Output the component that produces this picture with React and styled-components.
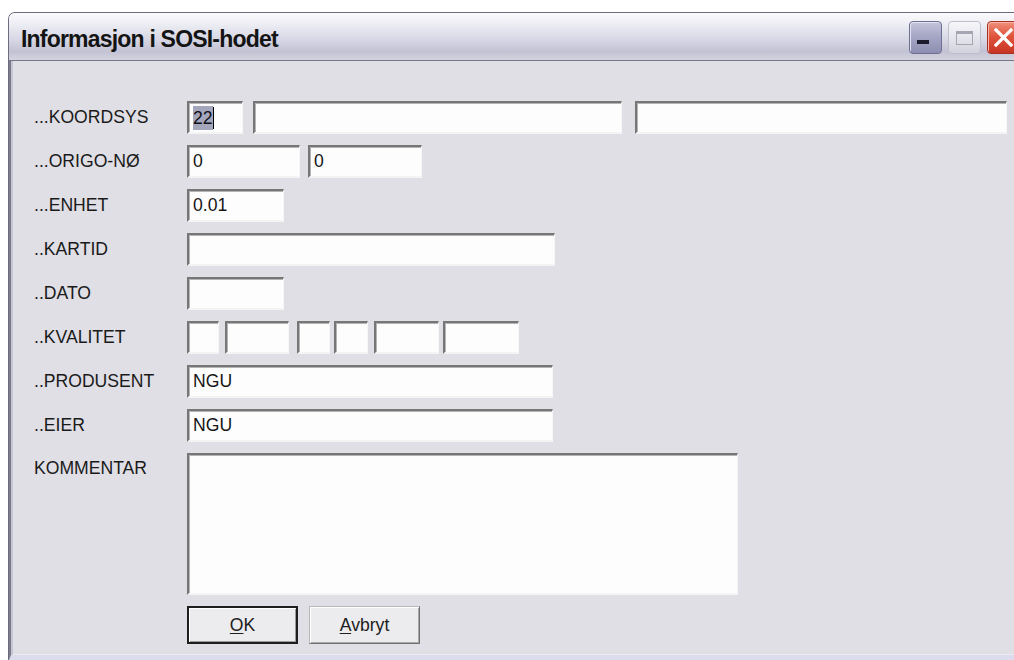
import React from "react";
import styled, { createGlobalStyle, css } from "styled-components";

const Global = createGlobalStyle`
  html, body {
    margin: 0;
    padding: 0;
    background: #ffffff;
    overflow: hidden;
  }
  body {
    font-family: "Liberation Sans", Arial, sans-serif;
  }
`;

const Window = styled.div`
  margin: 12px 0 0 8px;
  width: 1018px;
  height: 648px;
  box-sizing: border-box;
  display: flex;
  flex-direction: column;
  border-top-left-radius: 7px;
  border-top-right-radius: 7px;
  overflow: hidden;
  border: 1px solid #6c6c7e;
  border-bottom: none;
`;

const TitleBar = styled.div`
  height: 47px;
  flex: none;
  display: flex;
  align-items: center;
  padding: 0 5px 0 12px;
  background: linear-gradient(
    to bottom,
    #fbfbfd 0%,
    #ececf3 25%,
    #d8d8e6 55%,
    #c2c2d4 82%,
    #d4d4df 100%
  );
  border-bottom: 1px solid #76768a;
`;

const Title = styled.div`
  font-family: "Liberation Sans", Arial, sans-serif;
  font-weight: bold;
  font-size: 23px;
  letter-spacing: -0.8px;
  color: #141414;
  padding-top: 6px;
`;

const Controls = styled.div`
  margin-left: auto;
  display: flex;
  gap: 6px;
  align-items: center;
  padding-top: 2px;
`;

const CtlButton = styled.div`
  width: 33px;
  height: 33px;
  box-sizing: border-box;
  border-radius: 4px;
  position: relative;
  ${(p) =>
    p.$kind === "min" &&
    css`
      background: linear-gradient(to bottom, #c4c4dc 0%, #a4a4c4 50%, #8e8eb0 100%);
      border: 1px solid #6e6e92;
      box-shadow: inset 1px 1px 0 #e4e4f0;
    `}
  ${(p) =>
    p.$kind === "max" &&
    css`
      background: linear-gradient(to bottom, #f6f6fa 0%, #e2e2ea 60%, #d2d2de 100%);
      border: 1px solid #c0c0cc;
    `}
  ${(p) =>
    p.$kind === "close" &&
    css`
      background: linear-gradient(to bottom, #f0907c 0%, #e0543c 45%, #c83424 100%);
      border: 1px solid #a83020;
      box-shadow: inset 1px 1px 0 #f8b8a8;
    `}
`;

const MinBar = styled.div`
  position: absolute;
  left: 7px;
  bottom: 9px;
  width: 12px;
  height: 4px;
  background: #1c1c2c;
`;

const MaxBox = styled.div`
  position: absolute;
  left: 7px;
  top: 9px;
  width: 17px;
  height: 14px;
  box-sizing: border-box;
  border: 1px solid #a6a6b2;
  border-top-width: 3px;
`;

const Body = styled.div`
  flex: 1;
  background: #dfdfe5;
  border-left: 2px solid #7a7a8a;
  border-bottom: 5px solid #dcdcee;
  box-shadow: inset 2px 0 0 #c6c6d2, inset 0 -1px 0 #ececf0;
  padding: 40px 0 0 23px;
`;

const Form = styled.div`
  display: flex;
  flex-direction: column;
  gap: 11px;
`;

const Row = styled.div`
  display: flex;
  align-items: ${(p) => (p.$top ? "flex-start" : "center")};
  height: ${(p) => p.$h || 33}px;
`;

const Label = styled.div`
  width: 153px;
  flex: none;
  font-size: 17.6px;
  color: #1a1a1a;
  padding-top: ${(p) => (p.$top ? 5 : 0)}px;
`;

const Fields = styled.div`
  display: flex;
  gap: ${(p) => (p.$gap != null ? p.$gap : 6)}px;
  height: 100%;
`;

const Field = styled.div`
  box-sizing: border-box;
  width: ${(p) => p.$w}px;
  height: 100%;
  background: #fdfdfd;
  border-top: 2px solid #767676;
  border-left: 2px solid #767676;
  border-right: 1px solid #f6f6f6;
  border-bottom: 2px solid #f4f4f4;
  box-shadow: inset 1px 1px 0 #b4b4b4;
  margin-left: ${(p) => p.$ml || 0}px;
  padding-left: 4px;
  font-size: 17.6px;
  color: #151515;
  display: flex;
  align-items: ${(p) => (p.$multi ? "flex-start" : "center")};
`;

const Selected = styled.span`
  background: #a4a6bc;
  color: #101018;
  padding: 2px 0;
  line-height: 20px;
`;

const Caret = styled.span`
  display: inline-block;
  width: 1px;
  height: 22px;
  background: #000;
`;

const Buttons = styled.div`
  display: flex;
  gap: 11px;
  margin-left: 153px;
  height: 38px;
`;

const Button = styled.div`
  box-sizing: border-box;
  width: 111px;
  height: 100%;
  background: #ececee;
  display: flex;
  align-items: center;
  justify-content: center;
  font-size: 17.6px;
  color: #202020;
  ${(p) =>
    p.$default
      ? css`
          border: 2px solid #1e1e1e;
          box-shadow: inset 1px 1px 0 #ffffff, inset -1px -1px 0 #9a9a9a;
        `
      : css`
          border: 1px solid #b8b8b8;
          border-right-color: #707070;
          border-bottom-color: #707070;
          box-shadow: inset 1px 1px 0 #ffffff, inset -1px -1px 0 #a8a8a8;
        `}
  u {
    text-decoration: underline;
    text-underline-offset: 2px;
  }
`;

const kvalitet = [
  { w: 32 },
  { w: 64 },
  { w: 33, ml: 2 },
  { w: 34, ml: -2 },
  { w: 65 },
  { w: 76, ml: -2 },
];

export default function App() {
  return (
    <>
      <Global />
      <Window>
        <TitleBar>
          <Title>Informasjon i SOSI-hodet</Title>
          <Controls>
            <CtlButton $kind="min">
              <MinBar />
            </CtlButton>
            <CtlButton $kind="max">
              <MaxBox />
            </CtlButton>
            <CtlButton $kind="close">
              <svg width="31" height="31" viewBox="0 0 31 31">
                <path
                  d="M8 8 L23 23 M23 8 L8 23"
                  stroke="#ffffff"
                  strokeWidth="3.2"
                  strokeLinecap="square"
                />
              </svg>
            </CtlButton>
          </Controls>
        </TitleBar>
        <Body>
          <Form>
            <Row>
              <Label>...KOORDSYS</Label>
              <Fields $gap={10}>
                <Field $w={56}>
                  <Selected>22</Selected>
                  <Caret />
                </Field>
                <Field $w={369} />
                <Field $w={372} $ml={3} />
              </Fields>
            </Row>
            <Row>
              <Label>...ORIGO-NØ</Label>
              <Fields $gap={8}>
                <Field $w={113}>0</Field>
                <Field $w={114}>0</Field>
              </Fields>
            </Row>
            <Row>
              <Label>...ENHET</Label>
              <Fields>
                <Field $w={97}>0.01</Field>
              </Fields>
            </Row>
            <Row>
              <Label>..KARTID</Label>
              <Fields>
                <Field $w={368} />
              </Fields>
            </Row>
            <Row>
              <Label>..DATO</Label>
              <Fields>
                <Field $w={97} />
              </Fields>
            </Row>
            <Row>
              <Label>..KVALITET</Label>
              <Fields>
                {kvalitet.map((k, i) => (
                  <Field key={i} $w={k.w} $ml={k.ml} />
                ))}
              </Fields>
            </Row>
            <Row>
              <Label>..PRODUSENT</Label>
              <Fields>
                <Field $w={366}>NGU</Field>
              </Fields>
            </Row>
            <Row>
              <Label>..EIER</Label>
              <Fields>
                <Field $w={366}>NGU</Field>
              </Fields>
            </Row>
            <Row $h={142} $top>
              <Label $top>KOMMENTAR</Label>
              <Fields>
                <Field $w={551} $multi />
              </Fields>
            </Row>
            <Buttons>
              <Button $default>
                <span>
                  <u>O</u>K
                </span>
              </Button>
              <Button>
                <span>
                  <u>A</u>vbryt
                </span>
              </Button>
            </Buttons>
          </Form>
        </Body>
      </Window>
    </>
  );
}
